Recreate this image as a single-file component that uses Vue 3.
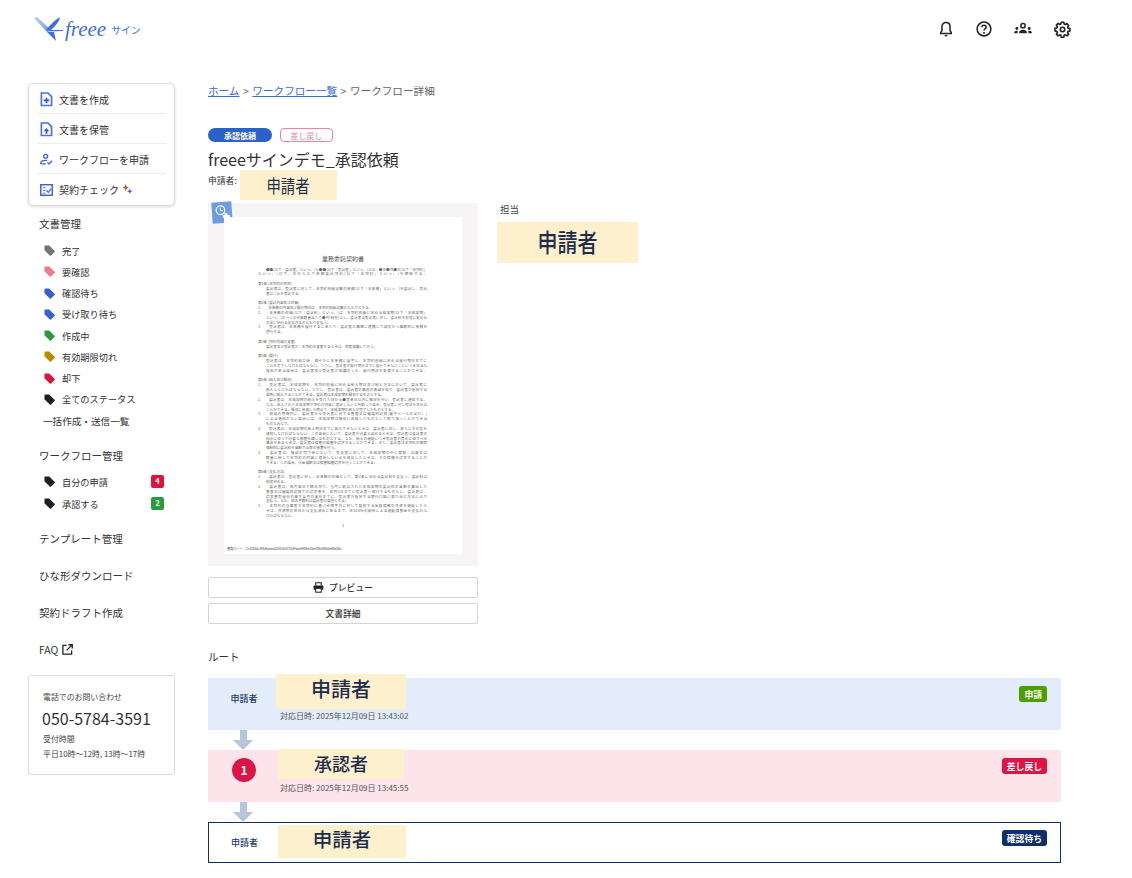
<script setup>
const statusTags = [
  { label: '完了', color: '#757575' },
  { label: '要確認', color: '#ee7a8a' },
  { label: '確認待ち', color: '#3a5fd0' },
  { label: '受け取り待ち', color: '#3a5fd0' },
  { label: '作成中', color: '#2a9a3c' },
  { label: '有効期限切れ', color: '#b88a00' },
  { label: '却下', color: '#dc143c' },
  { label: '全てのステータス', color: '#1f1f1f' }
]
const contractLines = [
  { t: '●●(以下「委託者」という。)と●●(以下「受託者」という。)とは、●年●月●日(以下「本契約」', c: 'ind' },
  { t: 'という。)付で、次のとおり業務委託契約(以下「本契約」という。)を締結する。', gap: true },
  { t: '第1条 (本契約の目的)' },
  { t: '委託者は、受託者に対して、本契約別紙記載の業務(以下「本業務」という。)を委託し、受託', c: 'ind' },
  { t: '者はこれを受託する。', c: 'hang', gap: true },
  { t: '第2条 (委託内容及び対価)' },
  { t: '1.　　本業務の内容及び履行期日は、本契約別紙記載のとおりとする。' },
  { t: '2.　　本業務の対価(以下「委託料」という。)は、本契約別紙に定める成果物(以下「本成果物」' },
  { t: 'という。)の一つの対価数量当たり●円(税別)とし、委託者は受託者に対し、委託料を別途に定める', c: 'hang tight' },
  { t: '方法に定める支払方法のとおり支払う。', c: 'hang' },
  { t: '3.　　受託者は、本業務を履行するにあたり、委託者と緊密に連携して誠実かつ継続的に業務を' },
  { t: '遂行する。', c: 'hang', gap: true },
  { t: '第3条 (契約内容の変更)' },
  { t: '委託者及び受託者が、本契約を変更するときは、両者協議して行う。', c: 'ind', gap: true },
  { t: '第4条 (履行)' },
  { t: '受託者は、本契約成立後、速やかに本業務に着手し、本契約別紙に定める履行期日までに', c: 'ind' },
  { t: 'これを完了しなければならない。ただし、受託者が履行期日までに履行できないことにつき正当な', c: 'hang tight' },
  { t: '理由がある場合は、委託者及び受託者が協議のうえ、履行期日を変更することができる。', c: 'hang', gap: true },
  { t: '第5条 (納入及び検収)' },
  { t: '1.　　受託者は、本成果物を、本契約別紙に定める納入期日及び納入方法において、委託者に' },
  { t: '納入しなければならない。ただし、受託者は、委託者の事前の承諾を得て、委託者が指定する', c: 'hang' },
  { t: '場所に納入することができる。委託者は本成果物を検収するものとする。', c: 'hang' },
  { t: '2.　　委託者は、本成果物の納入を受けた日から●営業日以内に検収を行い、受託者に通知する。' },
  { t: 'なお、納入された本成果物が契約の内容に適合しないと判断した場合、受託者に対し修正を求める', c: 'hang tight' },
  { t: 'ことができる。検収に合格した時点で、本成果物の納入が完了したものとする。', c: 'hang' },
  { t: '3.　　前項の期間内に、委託者から受託者に対する書面又は電磁的記録(電子メールを含む。)' },
  { t: 'による通知がない場合には、本成果物は検収に合格したものとして取り扱うことができる', c: 'hang' },
  { t: 'ものとみなす。', c: 'hang' },
  { t: '4.　　受託者は、本成果物の納入期日までに納入できないときは、委託者に対し、直ちにその旨を' },
  { t: '通知しなければならない。この場合において、委託者が必要と認めるときは、受託者は委託者の', c: 'hang' },
  { t: '指示に従って必要な措置を講じるものとする。なお、納入の遅延につき受託者の責めに帰すべき', c: 'hang' },
  { t: '事由があるときは、委託者は損害の賠償を請求することができる。また、委託者は本契約を解除', c: 'hang' },
  { t: '強制的に委託料を減額する等の措置を行う。', c: 'hang' },
  { t: '5.　　委託者は、検収の完了後において、受託者に対して、本成果物の中に瑕疵、品質又は' },
  { t: '数量に関して本契約の内容に適合しない点を発見したときは、その修補を請求することが', c: 'hang' },
  { t: 'できる。この場合、代金減額又は損害賠償請求を行うことができる。', c: 'hang', gap: true },
  { t: '第6条 (支払方法)' },
  { t: '1.　　委託者は、受託者に対し、本業務の対価として、第2条に定める委託料を支払う。委託料は' },
  { t: '別途定める。', c: 'hang' },
  { t: '2.　　委託者は、毎月末日で締め切り、当月に納品された本成果物の委託料の金額を算出した' },
  { t: '書面又は電磁的記録での請求書を、翌月5日までに受託者へ発行するものとし、委託者は、', c: 'hang' },
  { t: '請求書受領日の属する月の末日までに、受託者が指定する銀行口座に振り込む方法により', c: 'hang' },
  { t: '支払う。なお、振込手数料は委託者の負担とする。', c: 'hang' },
  { t: '3.　　本契約の当事者が本契約に基づき相手方に対して負担する金銭債務の弁済を遅延したと' },
  { t: 'きは、弁済期の翌日から支払済みに至るまで、年14.6%の割合による遅延損害金を支払わな', c: 'hang' },
  { t: 'ければならない。', c: 'hang' }
].map((l) => ({ ...l, full: l.t.length > 36 }))
</script>

<template>
  <div class="page">
    <header class="topbar">
      <a class="logo" aria-label="freee サイン">
        <svg class="bird" viewBox="0 0 30 26" width="30" height="26">
          <defs>
            <linearGradient id="wing" x1="0" y1="0" x2="1" y2="1">
              <stop offset="0" stop-color="#b9d2f6" />
              <stop offset="1" stop-color="#6f9aea" />
            </linearGradient>
          </defs>
          <path d="M0 1 L3 0 L16 12 L13 15 Z" fill="url(#wing)" />
          <path d="M26 0 C25 6 20 10 16 14 L12 13 C16 8 21 3 26 0 Z" fill="#3f6fe0" />
          <path d="M13 15 L20 15 L22 24 Z" fill="#3f6fe0" />
          <path d="M13 13 H29 V14 L13 14.500 Z" fill="#3f6fe0" />
        </svg>
        <span class="logo-word">freee</span>
        <span class="logo-sign">サイン</span>
      </a>
      <nav class="top-icons">
        <svg viewBox="0 0 24 24" width="18" height="18"><path d="M12 3.200c-3.300 0-5.400 2.500-5.400 5.800v5.200L5 16.600V18h14v-1.400l-1.600-2.400V9c0-3.300-2.100-5.800-5.400-5.800z" fill="none" stroke="#222" stroke-width="2" /><path d="M10 20h4a2 2 0 0 1-4 0z" fill="#222" /></svg>
        <svg viewBox="0 0 24 24" width="18" height="18"><circle cx="12" cy="12" r="9.200" fill="none" stroke="#222" stroke-width="2" /><path d="M9.200 9.600c0-1.700 1.200-2.700 2.800-2.700s2.900 1 2.900 2.500c0 2.300-2.900 2.300-2.900 4.600" fill="none" stroke="#222" stroke-width="2" /><circle cx="12" cy="17" r="1.250" fill="#222" /></svg>
        <svg viewBox="0 0 24 24" width="20" height="20"><circle cx="12" cy="8" r="2.600" fill="none" stroke="#222" stroke-width="1.800" /><path d="M7.500 17v-1.500c0-1.600 2.200-2.700 4.500-2.700s4.500 1.100 4.500 2.700V17z" fill="#222" /><circle cx="4.600" cy="11.400" r="1.700" fill="#222" /><circle cx="19.400" cy="11.400" r="1.700" fill="#222" /><path d="M1.500 17v-1c0-1 1.200-1.900 3-1.900.5 0 .9.100 1.300.2-.2.4-.3.8-.3 1.200V17zM22.500 17v-1c0-1-1.200-1.900-3-1.900-.5 0-.9.100-1.300.2.2.4.3.8.3 1.200V17z" fill="#222" /></svg>
        <svg class="gear" viewBox="0 0 24 24" width="17" height="17"><path d="M10.200 2.500h3.600l.5 2.700 1.600.7 2.300-1.500 2.500 2.500-1.500 2.300.7 1.600 2.700.5v3.600l-2.700.5-.7 1.600 1.500 2.300-2.500 2.500-2.300-1.500-1.600.7-.5 2.700h-3.600l-.5-2.700-1.600-.7-2.300 1.500-2.500-2.500 1.500-2.300-.7-1.600-2.700-.5V11l2.700-.5.7-1.600-1.500-2.300 2.500-2.500 2.300 1.500 1.600-.7z" transform="translate(0 -.8)" fill="none" stroke="#222" stroke-width="2.300" stroke-linejoin="round" /><circle cx="12" cy="12" r="3.100" fill="none" stroke="#222" stroke-width="2.300" /></svg>
      </nav>
    </header>

    <div class="shell">
      <aside class="sidebar">
        <div class="action-card">
          <a class="action">
            <svg viewBox="0 0 14 16" width="13" height="15"><path d="M1.500 1h7l4 4v9.500h-11z" fill="none" stroke="#4f6ef0" stroke-width="1.800" /><path d="M7 6v6M4 9h6" stroke="#3a55d8" stroke-width="1.800" /></svg>
            <span>文書を作成</span>
          </a>
          <a class="action">
            <svg viewBox="0 0 14 16" width="13" height="15"><path d="M1.500 1h7l4 4v9.500h-11z" fill="none" stroke="#4f6ef0" stroke-width="1.800" /><path d="M7 6.500 10 10H8v2.500H6V10H4z" fill="#3a55d8" /></svg>
            <span>文書を保管</span>
          </a>
          <a class="action">
            <svg viewBox="0 0 16 15" width="13" height="13"><circle cx="7" cy="3.500" r="2.400" fill="none" stroke="#3f62e0" stroke-width="1.600" /><path d="M1 13v-1.200C1 9.800 3.500 8.500 7 8.500c.7 0 1.300 0 1.900.2M1 13h6" fill="none" stroke="#3f62e0" stroke-width="1.600" /><path d="M9 11l2 2 4-4" fill="none" stroke="#3f62e0" stroke-width="1.600" /></svg>
            <span>ワークフローを申請</span>
          </a>
          <a class="action">
            <svg viewBox="0 0 14 13" width="13" height="12"><rect x=".8" y=".8" width="12.400" height="11.400" fill="none" stroke="#3f62e0" stroke-width="1.600" /><path d="M3 4h3M3 7h3M3 10h3" stroke="#3f62e0" stroke-width="1" /><path d="M7 7l2 2 3-4" fill="none" stroke="#3f62e0" stroke-width="1.300" /></svg>
            <span>契約チェック</span>
            <svg class="sparkle" viewBox="0 0 12 12" width="11" height="11"><path d="M4 0l1 2.600L7.500 4 5 5 4 7.500 3 5 .5 4 3 2.600z" fill="#c2571a" /><path d="M8.500 5l.9 2.200 2.100.8-2.100.8-.9 2.200-.9-2.200-2.100-.8 2.100-.8z" fill="#7a45d8" /></svg>
          </a>
        </div>

        <h3 class="nav-head first">文書管理</h3>
        <ul class="tag-list">
          <li v-for="tag in statusTags" :key="tag.label" class="tag-row">
            <svg viewBox="0 0 12 12" width="11" height="11"><path d="M.5 1.500a1 1 0 0 1 1-1h4.200l5.800 5.800a1 1 0 0 1 0 1.400l-3.800 3.800a1 1 0 0 1-1.400 0L.5 5.700z" :fill="tag.color" /></svg>
            <span>{{ tag.label }}</span>
          </li>
          <li class="tag-row plain">一括作成・送信一覧</li>
        </ul>

        <h3 class="nav-head wf">ワークフロー管理</h3>
        <ul class="wf-list">
          <li class="wf-row">
            <svg viewBox="0 0 12 12" width="11" height="11"><path d="M.5 1.500a1 1 0 0 1 1-1h4.200l5.800 5.800a1 1 0 0 1 0 1.400l-3.800 3.800a1 1 0 0 1-1.400 0L.5 5.700z" fill="#1f1f1f" /></svg>
            <span>自分の申請</span>
            <b class="count red">4</b>
          </li>
          <li class="wf-row">
            <svg viewBox="0 0 12 12" width="11" height="11"><path d="M.5 1.500a1 1 0 0 1 1-1h4.200l5.800 5.800a1 1 0 0 1 0 1.400l-3.800 3.800a1 1 0 0 1-1.400 0L.5 5.700z" fill="#1f1f1f" /></svg>
            <span>承認する</span>
            <b class="count green">2</b>
          </li>
        </ul>

        <h3 class="nav-head solo t1">テンプレート管理</h3>
        <h3 class="nav-head solo">ひな形ダウンロード</h3>
        <h3 class="nav-head solo">契約ドラフト作成</h3>
        <h3 class="nav-head solo faq">FAQ
          <svg viewBox="0 0 12 12" width="11" height="11"><path d="M5 1.500H1v9.500h9.500V7" fill="none" stroke="#222" stroke-width="1.400" /><path d="M5 7l6-6M7 .8h4.200V5" fill="none" stroke="#222" stroke-width="1.400" /></svg>
        </h3>

        <div class="contact">
          <div class="contact-label">電話でのお問い合わせ</div>
          <div class="contact-phone">050-5784-3591</div>
          <div class="contact-label">受付時間</div>
          <div class="contact-label times">平日10時〜12時, 13時〜17時</div>
        </div>
      </aside>

      <main class="content">
        <div class="crumbs"><a>ホーム</a><span class="sep">&gt;</span><a>ワークフロー一覧</a><span class="sep">&gt;</span>ワークフロー詳細</div>

        <div class="pills">
          <span class="pill solid">承認依頼</span>
          <span class="pill outline">差し戻し</span>
        </div>
        <h1 class="title">freeeサインデモ_承認依頼</h1>
        <div class="applicant">
          <span>申請者:</span>
          <span class="mask mask-applicant"><span class="narrow">申請者</span></span>
        </div>

        <div class="detail">
          <div class="doc-col">
            <div class="doc-frame">
              <span class="stamp">
                <svg viewBox="0 0 20 20" width="19" height="19"><circle cx="8" cy="7.500" r="4.500" fill="none" stroke="#fff" stroke-width="1.300" /><path d="M8 5v3h2.500" fill="none" stroke="#fff" stroke-width="1" /><path d="M12 11h3v2h2.500v2.500H10V13h2z" fill="#fff" /></svg>
              </span>
              <div class="doc-page">
                <div class="doc-title">業務委託契約書</div>
                <p v-for="(line, i) in contractLines" :key="i" class="doc-line" :class="[line.c, { gap: line.gap, full: line.full }]">{{ line.t }}</p>
                <div class="doc-num">1</div>
                <div class="doc-code">書類コード：2c1f23dc89b9abda225016257234abd9f06d1fec09b59fd2e6fb38a</div>
              </div>
            </div>
            <button class="doc-btn preview" type="button">
              <svg viewBox="0 0 14 14" width="11" height="11"><path d="M3.500 4.500V1h7v3.500" fill="none" stroke="#222" stroke-width="1.400" /><rect x=".8" y="4.500" width="12.400" height="5.500" rx="1" fill="#222" /><rect x="3.500" y="8" width="7" height="5" fill="#fff" stroke="#222" stroke-width="1.300" /></svg>
              プレビュー
            </button>
            <button class="doc-btn" type="button">文書詳細</button>
          </div>
          <div class="owner-col">
            <div class="owner-label">担当</div>
            <div class="mask mask-owner"><span class="narrow">申請者</span></div>
          </div>
        </div>

        <h2 class="route-head">ルート</h2>
        <section class="route">
          <div class="step blue">
            <div class="who">申請者</div>
            <div class="step-body">
              <div class="mask mask-r1">申請者</div>
              <div class="when">対応日時: 2025年12月09日 13:43:02</div>
            </div>
            <span class="state green-bg">申請</span>
          </div>
          <div class="arrow"></div>
          <div class="step pink">
            <div class="who"><span class="num">1</span></div>
            <div class="step-body">
              <div class="mask mask-r2">承認者</div>
              <div class="when">対応日時: 2025年12月09日 13:45:55</div>
            </div>
            <span class="state red-bg">差し戻し</span>
          </div>
          <div class="arrow"></div>
          <div class="step outlined">
            <div class="who">申請者</div>
            <div class="step-body">
              <div class="mask mask-r3">申請者</div>
            </div>
            <span class="state navy-bg">確認待ち</span>
          </div>
        </section>
      </main>
    </div>
  </div>
</template>

<style>
html, body { margin: 0; background: #fff; }
</style>

<style scoped>
* { box-sizing: border-box; }
.page {
  width: 1132px;
  height: 878px;
  overflow: hidden;
  font-family: "Noto Sans CJK JP", "Noto Sans", sans-serif;
  color: #333;
  background: #fff;
}
.topbar {
  height: 58px;
  display: flex;
  justify-content: space-between;
  align-items: center;
  padding: 0 61.500px 0 34px;
}
.logo { display: flex; align-items: center; color: #3f6fe0; }
.bird { margin-top: 1px; }
.logo-word {
  font-family: "Liberation Serif", serif;
  font-style: italic;
  font-size: 21px;
  margin-left: 1px;
  line-height: 1;
}
.logo-sign { font-size: 10px; margin-left: 5px; letter-spacing: -.2px; }
.top-icons { display: flex; align-items: center; gap: 20px; }
.gear { margin-left: .500px; }
.shell {
  display: grid;
  grid-template-columns: 147px 853px;
  column-gap: 33px;
  padding: 25px 0 0 28px;
}
.action-card {
  height: 123px;
  padding: 0 8px;
  border: 1px solid #dcdcdc;
  border-radius: 5px;
  box-shadow: 0 1px 3px rgba(0,0,0,.15);
  background: #fff;
}
.action {
  height: 30px;
  display: flex;
  align-items: center;
  gap: 6px;
  padding: 2px 0 0 3px;
  font-size: 10px;
  color: #333;
  border-bottom: 1px solid #ececec;
}
.action:last-child { border-bottom: 0; padding-top: 1px; }
.action svg { flex: none; }
.sparkle { margin-left: -3px; }
.nav-head {
  margin: 0;
  padding-left: 11px;
  height: 20px;
  line-height: 20px;
  font-size: 10.500px;
  font-weight: 400;
  color: #333;
}
.nav-head.first { margin-top: 8px; }
.nav-head.wf { margin-top: 14.400px; }
.nav-head.t1 { margin-top: 14px; }
.nav-head.solo { margin-bottom: 17px; }
.nav-head.faq { display: flex; align-items: center; gap: 4px; margin-bottom: 15px; }
.tag-list, .wf-list { list-style: none; margin: 0; padding: 0; }
.tag-list { margin-top: 6.100px; }
.tag-row {
  height: 21.250px;
  display: flex;
  align-items: center;
  gap: 7px;
  padding-left: 16px;
  font-size: 9.200px;
}
.tag-row.plain { padding-left: 15px; font-size: 9.600px; }
.wf-list { margin-top: 5px; }
.wf-row {
  height: 22px;
  display: flex;
  align-items: center;
  gap: 7px;
  padding-left: 16px;
  font-size: 9.200px;
}
.count {
  width: 13px;
  height: 12.500px;
  margin-left: auto;
  margin-right: 11px;
  border-radius: 2px;
  color: #fff;
  font-size: 7.500px;
  font-weight: 700;
  text-align: center;
  line-height: 12.500px;
}
.count.red { background: #dc143c; }
.count.green { background: #2a9a3c; }
.contact {
  height: 100px;
  padding: 14px 0 0 14px;
  border: 1px solid #dcdcdc;
  border-radius: 3px;
}
.contact-label { font-size: 7.900px; line-height: 14px; color: #444; white-space: nowrap; }
.contact-phone { font-size: 16px; line-height: 28px; color: #333; margin-left: -1px; white-space: nowrap; }
.times { margin-top: 1px; }

.crumbs { margin-top: -.5px; height: 16px; line-height: 16px; font-size: 10.600px; color: #666; }
.crumbs a { color: #3a6ae8; text-decoration: underline; }
.sep { margin: 0 3.500px; }
.pills { margin-top: 29.500px; display: flex; gap: 8px; }
.pill {
  height: 14px;
  display: flex;
  align-items: center;
  justify-content: center;
  border-radius: 7px;
  font-size: 8px;
}
.pill.solid { width: 64px; background: #2a62c8; color: #fff; font-weight: 700; }
.pill.outline { width: 53px; background: #fff; color: #f07fa5; border: 1px solid #f07fa5; border-radius: 4px; }
.title { margin: 2px 0 0; font-size: 16px; line-height: 30px; font-weight: 400; color: #333; }
.applicant { height: 12px; display: flex; align-items: center; font-size: 8.800px; color: #333; }
.mask { background: #fdf0cc; color: #1e2d4d; text-align: center; font-weight: 500; }
.narrow { display: inline-block; transform: scaleX(.8); }
.mask-applicant { align-self: flex-start; width: 97px; height: 30px; line-height: 30px; margin: -4px 0 0 3px; font-size: 18px; font-weight: 400; }
.detail { display: flex; margin-top: 17px; }
.doc-col { width: 270px; }
.doc-frame { position: relative; height: 363px; padding: 14px 16px 12px; background: #f6f4f5; }
.stamp {
  position: absolute;
  left: 4px;
  top: -1px;
  width: 20px;
  height: 21px;
  display: flex;
  align-items: center;
  justify-content: center;
  background: #6b9be0;
  transform: rotate(-4deg);
}
.doc-page {
  height: 337px;
  padding: 39px 34px 0;
  background: #fff;
  font-size: 3.600px;
  line-height: 4.850px;
  color: #666;
  position: relative;
}
.doc-title { position: absolute; top: 38px; left: 0; right: 0; text-align: center; font-size: 6px; line-height: 8px; color: #555; }
.doc-line { width: 169px; margin: 0; white-space: nowrap; }
.doc-line.full { white-space: normal; text-align: justify; text-align-last: justify; height: 4.850px; overflow: hidden; }
.doc-line.tight { font-size: 3.400px; }
.doc-title + .doc-line { margin-top: 11.500px; }
.doc-line.ind, .doc-line.hang { padding-left: 8px; }
.doc-line.gap { margin-bottom: 4.750px; }
.doc-num { position: absolute; top: 306px; left: 0; right: 0; text-align: center; font-size: 4px; }
.doc-code { position: absolute; left: 3px; top: 329px; font-size: 3.200px; line-height: 5px; white-space: nowrap; color: #444; }
.doc-btn {
  width: 270px;
  height: 21px;
  display: flex;
  align-items: center;
  justify-content: center;
  gap: 5px;
  margin-top: 5px;
  background: #fff;
  border: 1px solid #d4d4d4;
  border-radius: 2px;
  font-family: inherit;
  font-size: 8.800px;
  font-weight: 500;
  color: #333;
  padding: 0;
}
.doc-btn.preview { margin-top: 11px; }
.owner-col { margin-left: 19px; }
.owner-label { margin-left: 3px; height: 12px; line-height: 12px; font-size: 9.500px; color: #444; }
.mask-owner { width: 141px; height: 41px; line-height: 38px; margin-top: 7px; font-size: 25px; }
.route-head { margin: 26px 0 0; height: 14px; line-height: 14px; font-size: 10.500px; font-weight: 400; color: #333; }
.route { margin-top: 14px; }
.step { position: relative; display: flex; align-items: flex-start; height: 52px; }
.step.blue { background: #e2ecfb; }
.step.pink { background: #fde4ea; }
.step.outlined { height: 41px; background: #fff; border: 1px solid #0f2f6b; }
.who {
  width: 72px;
  height: 40px;
  margin-right: -4px;
  display: flex;
  align-items: center;
  justify-content: center;
  font-size: 9px;
  font-weight: 500;
  color: #1e3a6e;
}
.outlined .who { width: 71px; height: 31px; margin-top: 4px; }
.num {
  width: 24px;
  height: 24px;
  border-radius: 50%;
  background: #dc1546;
  color: #fff;
  font-size: 12px;
  font-weight: 700;
  text-align: center;
  line-height: 24px;
}
.step-body { flex: 1; position: relative; }
.when { position: absolute; left: 4px; top: 32px; font-size: 8px; line-height: 12px; color: #555; white-space: nowrap; }
.mask-r1 { position: absolute; left: 0; top: -4px; width: 130px; height: 35px; line-height: 30px; font-size: 20px; }
.mask-r2 { position: absolute; left: 2px; top: -1px; width: 126px; height: 30px; line-height: 28px; font-size: 18px; }
.mask-r3 { position: absolute; left: 2px; top: 2px; width: 128px; height: 33px; line-height: 28px; font-size: 19.500px; }
.state {
  position: absolute;
  right: 14px;
  top: 8px;
  height: 16px;
  padding: 0 5px;
  display: flex;
  align-items: center;
  border-radius: 3px;
  font-size: 8.800px;
  font-weight: 700;
  color: #fff;
}
.outlined .state { right: 13px; top: 7px; }
.green-bg { background: #4d9f00; }
.red-bg { background: #dc1546; }
.navy-bg { background: #0f2f6b; }
.arrow { position: relative; width: 20px; height: 20px; margin-left: 25px; }
.arrow::before { content: ""; position: absolute; left: 6.500px; top: 0; width: 7px; height: 10px; background: #b5c5dc; }
.arrow::after { content: ""; position: absolute; left: 0; top: 10px; border-left: 10px solid transparent; border-right: 10px solid transparent; border-top: 10px solid #b5c5dc; }
</style>
